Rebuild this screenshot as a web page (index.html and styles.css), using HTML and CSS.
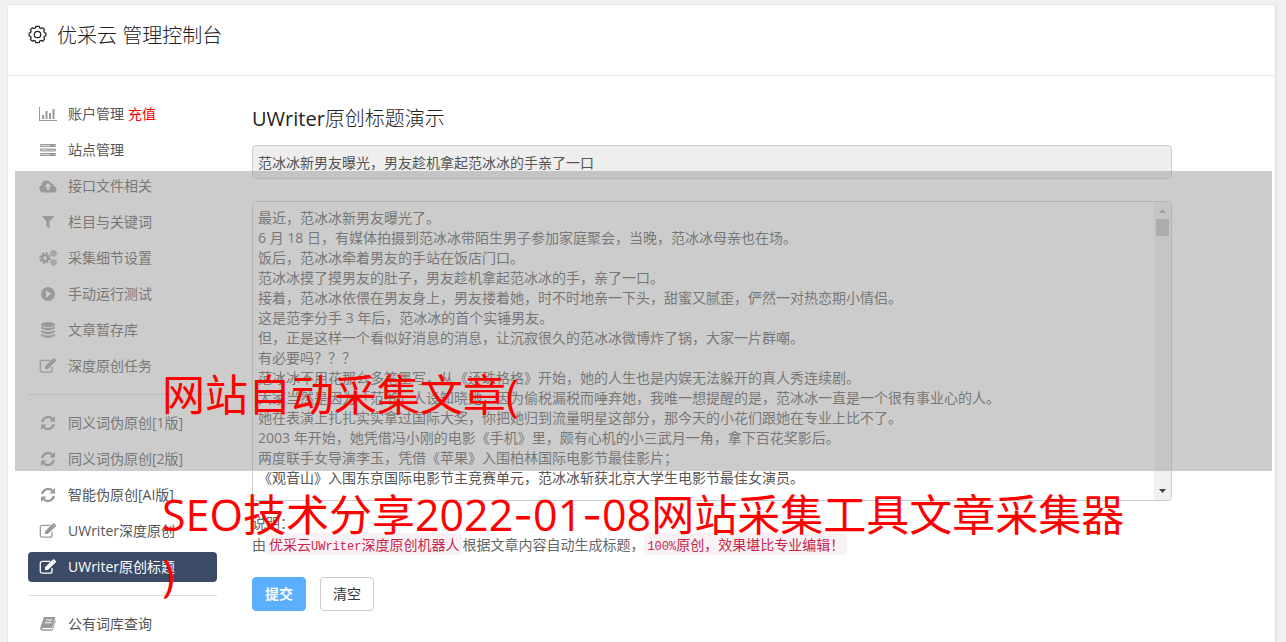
FILE: index.html
```html
<!DOCTYPE html>
<html lang="zh-CN">
<head>
<meta charset="utf-8">
<title>优采云 管理控制台</title>
<link rel="stylesheet" href="styles.css">
</head>
<body>
<svg class="sprite" aria-hidden="true">
  <symbol id="edit" viewBox="0 0 18 16"><path d="M13 9v3.200a2 2 0 0 1-2 2H3.300a2 2 0 0 1-2-2V4.300a2 2 0 0 1 2-2H11" fill="none" stroke="currentColor" stroke-width="1.300"/><path fill="currentColor" d="M6 8.200 13.200 1l2.900 2.900-7.200 7.200H6zM14 .6q.7-.7 1.400 0l1.500 1.500q.6.700 0 1.300l-.5.500-2.900-2.900z"/></symbol>
  <symbol id="refresh" viewBox="0 0 16 16"><path d="M2.200 7A6 6 0 0 1 12.500 3.900M13.800 9A6 6 0 0 1 3.500 12.100" fill="none" stroke="currentColor" stroke-width="2.200"/><path fill="currentColor" d="M15 1v5.500H9.500zM1 15V9.500h5.500z"/></symbol>
  <symbol id="gear" viewBox="0 0 16 16"><circle cx="8" cy="8" r="4" fill="none" stroke="currentColor" stroke-width="3.400"/><circle cx="8" cy="8" r="6.600" fill="none" stroke="currentColor" stroke-width="2.600" stroke-dasharray="2.900 2.284"/></symbol>
</svg>
<div class="panel">
  <header class="head">
    <svg class="head-icon" viewBox="0 0 20 20" fill="none" stroke="currentColor" stroke-width="1.300"><circle cx="10" cy="10" r="3.400"/><path d="M8.200 1.500h3.600l.6 1.700 1.300.5 1.700-.8 2 2-.7 1.700.5 1.300 1.600.7v2.800l-1.600.7-.5 1.300.7 1.700-2 2-1.700-.8-1.300.5-.6 1.700H8.200l-.6-1.700-1.300-.5-1.700.8-2-2 .7-1.700-.5-1.300-1.600-.7V8.600l1.600-.7.5-1.300-.7-1.700 2-2 1.700.8 1.300-.5z"/></svg>
    <h1>优采云 管理控制台</h1>
  </header>
  <div class="body">
    <nav class="side">
      <div class="item"><svg class="icon" viewBox="0 0 18 16" fill="currentColor"><path d="M0 1h1v13h17v1H0zM3 9h2v4H3zM6.500 5h2v8h-2zM10 7h2v6h-2zM13.500 3h2v10h-2z"/></svg><a href="#">账户管理</a><a href="#" class="pay">充值</a></div>
      <a href="#" class="item"><svg class="icon" viewBox="0 0 18 16"><path d="M1.500 2.500h15v2h-15zM1.500 7h15v2h-15zM1.500 11.500h15v2h-15z" fill="#ddd" stroke="currentColor"/><path d="M11 3.500h4M8 8h3m1 0h3M11 12.500h4" fill="none" stroke="currentColor"/></svg>站点管理</a>
      <a href="#" class="item"><svg class="icon" viewBox="0 0 18 16"><path fill="currentColor" fill-rule="evenodd" d="M4.500 14.500A4 4 0 0 1 2.400 7 5 5 0 0 1 12 5.500 2.600 2.600 0 0 1 15 8.200a3.200 3.200 0 0 1-1.200 6.300zM9 5 5.500 8.700H8V12h2.200V8.700h2.500z"/></svg>接口文件相关</a>
      <a href="#" class="item"><svg class="icon" viewBox="0 0 18 16"><path fill="currentColor" d="M3 2h12.500l-5 5.500V15L7.500 12V7.500z"/></svg>栏目与关键词</a>
      <a href="#" class="item"><svg class="icon" viewBox="0 0 18 16"><use href="#gear" x="0" y="2" width="12" height="12"/><use href="#gear" x="11" y="0" width="7" height="7"/><use href="#gear" x="11" y="9" width="7" height="7"/></svg>采集细节设置</a>
      <a href="#" class="item"><svg class="icon" viewBox="0 0 18 16"><path fill="currentColor" fill-rule="evenodd" d="M9 1a7 7 0 1 0 0 14A7 7 0 0 0 9 1zM7 4.500 12.500 8 7 11.500z"/></svg>手动运行测试</a>
      <a href="#" class="item"><svg class="icon" viewBox="0 0 18 16" fill="currentColor"><ellipse cx="9" cy="2.600" rx="7" ry="2.600"/><path d="M2 4.500q7 3 14 0v1.800q-7 4.500-14 0zM2 8.200q7 3 14 0V10q-7 4.500-14 0zM2 11.900q7 3 14 0v1.500q-7 5-14 0z"/></svg>文章暂存库</a>
      <a href="#" class="item"><svg class="icon"><use href="#edit"/></svg>深度原创任务</a>
      <hr>
      <a href="#" class="item"><svg class="icon"><use href="#refresh"/></svg>同义词伪原创[1版]</a>
      <a href="#" class="item"><svg class="icon"><use href="#refresh"/></svg>同义词伪原创[2版]</a>
      <a href="#" class="item"><svg class="icon"><use href="#refresh"/></svg>智能伪原创[AI版]</a>
      <a href="#" class="item"><svg class="icon"><use href="#edit"/></svg>UWriter深度原创</a>
      <a href="#" class="item active"><svg class="icon"><use href="#edit"/></svg>UWriter原创标题</a>
      <hr>
      <a href="#" class="item"><svg class="icon" viewBox="0 0 18 16"><path fill="currentColor" fill-rule="evenodd" d="M6 1h9.500q1 .2.700 1.200L13.500 11q-.3 1-1.500 1H3.500q-1 .8.200 1.300h9.500L16.300 4q.8.500.5 1.200L14 13.600q-.4 1.100-1.500 1.100h-9Q.8 14.500 1.300 11.700L4.500 2.200Q5 1 6 1zM7 3.500l-.3 1h6.500l.3-1zM6 6.300l-.3 1h6.500l.3-1z"/></svg>公有词库查询</a>
    </nav>
    <main class="main">
      <h2><label for="title"><span class="latin">UWriter</span>原创标题演示</label></h2>
      <input id="title" class="title-box" type="text" readonly value="范冰冰新男友曝光，男友趁机拿起范冰冰的手亲了一口">
      <div class="editor">
        <textarea aria-label="文章内容" rows="14">最近，范冰冰新男友曝光了。
6 月 18 日，有媒体拍摄到范冰冰带陌生男子参加家庭聚会，当晚，范冰冰母亲也在场。
饭后，范冰冰牵着男友的手站在饭店门口。
范冰冰摸了摸男友的肚子，男友趁机拿起范冰冰的手，亲了一口。
接着，范冰冰依偎在男友身上，男友搂着她，时不时地亲一下头，甜蜜又腻歪，俨然一对热恋期小情侣。
这是范李分手 3 年后，范冰冰的首个实锤男友。
但，正是这样一个看似好消息的消息，让沉寂很久的范冰冰微博炸了锅，大家一片群嘲。
有必要吗？？？
范冰冰不用花那么多笔墨写，从《还珠格格》开始，她的人生也是内娱无法躲开的真人秀连续剧。
大家当然是因为「范爷」人设知晓她，因为偷税漏税而唾弃她，我唯一想提醒的是，范冰冰一直是一个很有事业心的人。
她在表演上扎扎实实拿过国际大奖，你把她归到流量明星这部分，那今天的小花们跟她在专业上比不了。
2003 年开始，她凭借冯小刚的电影《手机》里，颇有心机的小三武月一角，拿下百花奖影后。
两度联手女导演李玉，凭借《苹果》入围柏林国际电影节最佳影片；
《观音山》入围东京国际电影节主竞赛单元，范冰冰斩获北京大学生电影节最佳女演员。</textarea>
        <div class="scroll" aria-hidden="true">
          <svg class="arrow dim" viewBox="0 0 7 4"><path fill="currentColor" d="M3.500 0 7 4H0z"/></svg>
          <div class="track"><div class="thumb"></div></div>
          <svg class="arrow" viewBox="0 0 7 4"><path fill="currentColor" d="M3.500 4 0 0h7z"/></svg>
        </div>
      </div>
      <p class="note">说明：<br>由<code>优采云<span>UWriter</span>深度原创机器人</code>根据文章内容自动生成标题，<code><span>100%</span>原创，效果堪比专业编辑！</code></p>
      <div class="actions">
        <button type="button" class="btn primary">提交</button>
        <button type="button" class="btn">清空</button>
      </div>
    </main>
  </div>
</div>
<div class="banner"><p>网站自动采集文章(<br><br>SEO技术分享2022<span class="dash">-</span>01<span class="dash">-</span>08网站采集工具文章采集器<br>)</p></div>
</body>
</html>
```
FILE: styles.css
```css
* { box-sizing: border-box; }
body {
  margin: 0;
  height: 100vh;
  overflow: hidden;
  position: relative;
  padding: 4px 9px 0 7px;
  background: #f1f1f1;
  color: #555;
  font: 14px/20px "Open Sans", "Noto Sans CJK SC", sans-serif;
}
.sprite { position: absolute; width: 0; height: 0; }
a { color: inherit; text-decoration: none; }
h1, h2, p { margin: 0; font-weight: 400; }
.panel {
  min-height: 100vh;
  background: #fff;
  border: 1px solid #e5e5e5;
  border-right-width: 2px;
  border-radius: 4px;
}
.head {
  display: flex;
  align-items: flex-start;
  gap: 10px;
  height: 71px;
  padding: 17px 20px 0;
  border-bottom: 1px solid #e5e5e5;
  color: #222;
}
.head-icon { width: 19px; height: 19px; margin-top: 3px; }
h1 { font-size: 20px; line-height: 28px; font-weight: 300; }
.body { display: flex; gap: 35px; padding: 23px 103px 0 20px; }
.side { flex: none; width: 189px; display: flex; flex-direction: column; gap: 6px; }
.side hr { width: 100%; height: 1px; margin: 7px 0; border: 0; background: #ddd; }
.item {
  display: flex;
  align-items: center;
  gap: 4px;
  height: 30px;
  padding-left: 11px;
  border-radius: 4px;
  white-space: nowrap;
}
.icon { flex: none; width: 18px; height: 16px; margin-right: 7px; color: #999; }
.pay { color: #f00; }
.active { background: #3b4a66; color: #fff; }
.active .icon { color: #fff; }
.main { flex: 1; min-width: 0; }
h2 { margin: 5px 0 12px; font-size: 20px; line-height: 29px; color: #222; font-weight: 300; }
.latin { font-weight: 400; }
.title-box {
  display: block;
  width: 100%;
  height: 34px;
  padding: 0 5px;
  border: 1px solid #ccc;
  border-radius: 4px;
  background: #eee;
  color: #555;
  font: inherit;
}
.editor {
  display: flex;
  margin-top: 22px;
  border: 1px solid #ccc;
  border-radius: 4px;
  overflow: hidden;
}
.editor textarea {
  flex: 1;
  min-width: 0;
  height: 298px;
  padding: 6px 5px;
  border: 0;
  resize: none;
  overflow: hidden;
  background: #fff;
  color: #555;
  font: inherit;
}
.scroll {
  width: 17px;
  display: flex;
  flex-direction: column;
  align-items: center;
  padding: 7px 0;
  background: #f0f0f0;
}
.track { flex: 1; padding-top: 6px; }
.thumb { width: 13px; height: 17px; background: #c1c1c1; }
.arrow { width: 7px; height: 4px; color: #444; }
.dim { color: #a3a3a3; }
.note { margin-top: 11px; line-height: 22px; color: #666; }
code {
  padding: 1px 3px;
  border-radius: 4px;
  background: #f9f2f4;
  color: #c7254e;
  font: 14px/18px "Noto Sans CJK SC", sans-serif;
}
code span { font: 12px/18px "Liberation Mono", monospace; }
.actions { display: flex; gap: 14px; margin-top: 21px; }
.btn {
  width: 54px;
  height: 34px;
  padding: 0;
  border: 1px solid #ccc;
  border-radius: 4px;
  background: #fff;
  color: #333;
  font: inherit;
}
.primary { border-color: #5aafff; background: #5aafff; color: #fff; font-weight: 600; }
.banner {
  position: absolute;
  top: 171px;
  left: 15px;
  right: 14px;
  height: 300px;
  padding: 194px 0 0 147px;
  background: rgba(153, 153, 153, .5);
  color: #f00;
  font-size: 43px;
  line-height: 60px;
  white-space: nowrap;
}
.dash { font-family: Inter, sans-serif; }
```
